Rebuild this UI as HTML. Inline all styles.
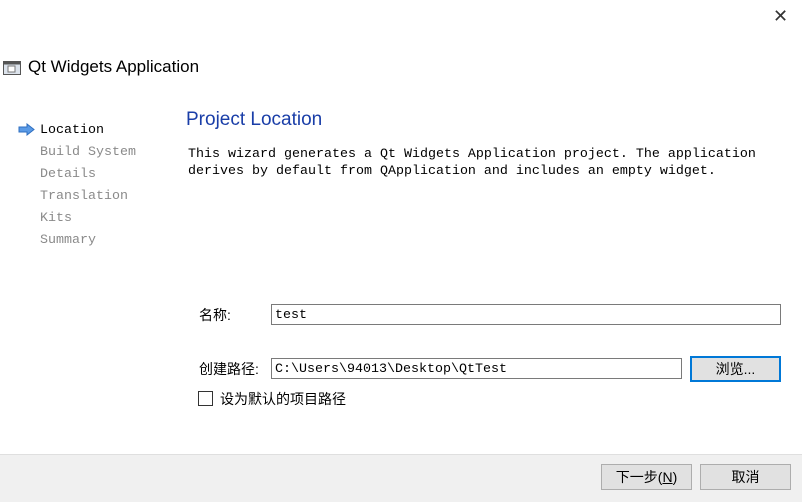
<!DOCTYPE html>
<html><head><meta charset="utf-8"><style>
body{margin:0;width:802px;height:501px;background:#fff;position:relative;overflow:hidden;font-family:"Liberation Sans","Noto Sans CJK SC",sans-serif;}
.a{position:absolute;white-space:nowrap}
.mono{font-family:"Liberation Mono","Noto Sans CJK SC",monospace;font-size:13.33px}
.inp{position:absolute;border:1px solid #7a7a7a;background:#fff;box-sizing:border-box;font-family:"Liberation Mono",monospace;font-size:13.33px;padding:3px 3px 0;line-height:16px}
.btn{position:absolute;background:#e1e1e1;border:1px solid #adadad;box-sizing:border-box;text-align:center;font-family:"Liberation Sans","Noto Sans CJK SC",sans-serif;font-size:14px;line-height:24px}
.nav{color:#8a8a8a}
.cj{font-size:14px}
</style></head><body>
<div class="a" style="left:773px;top:6px;font-size:18px;color:#333">✕</div>
<svg class="a" style="left:3px;top:61px" width="18" height="14"><rect x="0.5" y="0.5" width="17" height="13" fill="#dce3ec" stroke="#555"/><rect x="0.5" y="0.5" width="17" height="3" fill="#555"/><rect x="5" y="5" width="7" height="6" fill="#fff" stroke="#777"/></svg>
<div class="a" style="left:28px;top:57px;font-size:17px;color:#000">Qt Widgets Application</div>
<svg class="a" style="left:18px;top:123px" width="18" height="13"><path d="M1 4h8V1l7 5.5-7 5.5V9H1z" fill="#5a9ae6" stroke="#2f6fc0"/></svg>
<div class="a mono" style="left:40px;top:123px;color:#000">Location</div>
<div class="a mono nav" style="left:40px;top:145px">Build System</div>
<div class="a mono nav" style="left:40px;top:167px">Details</div>
<div class="a mono nav" style="left:40px;top:189px">Translation</div>
<div class="a mono nav" style="left:40px;top:211px">Kits</div>
<div class="a mono nav" style="left:40px;top:233px">Summary</div>
<div class="a" style="left:186px;top:109px;font-size:19px;color:#1a3ea8">Project Location</div>
<div class="a mono" style="left:188px;top:146px;line-height:17px">This wizard generates a Qt Widgets Application project. The application<br>derives by default from QApplication and includes an empty widget.</div>
<div class="a cj" style="left:199px;top:305px">名称:</div>
<div class="inp" style="left:271px;top:304px;width:510px;height:21px">test</div>
<div class="a cj" style="left:199px;top:359px">创建路径:</div>
<div class="inp" style="left:271px;top:358px;width:411px;height:21px">C:\Users\94013\Desktop\QtTest</div>
<div class="btn" style="left:690px;top:356px;width:91px;height:26px;border:2px solid #0078d7;line-height:22px">浏览...</div>
<div class="a" style="left:198px;top:391px;width:15px;height:15px;border:1px solid #333;box-sizing:border-box"></div>
<div class="a cj" style="left:220px;top:389px">设为默认的项目路径</div>
<div class="a" style="left:0;top:454px;width:802px;height:47px;background:#f0f0f0;border-top:1px solid #dfdfdf"></div>
<div class="btn" style="left:601px;top:464px;width:91px;height:26px">下一步(<u>N</u>)</div>
<div class="btn" style="left:700px;top:464px;width:91px;height:26px">取消</div>
</body></html>
